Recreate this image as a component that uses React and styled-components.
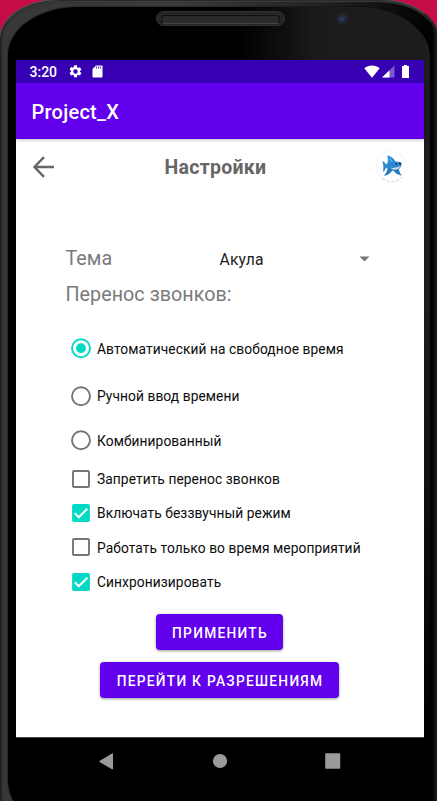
import React from "react";
import styled, { createGlobalStyle } from "styled-components";

const Global = createGlobalStyle`
  * { box-sizing: border-box; }
  html, body { margin: 0; padding: 0; }
  body { background: #c60c46; font-family: Roboto, sans-serif; overflow: hidden; }
`;

const Stage = styled.main`
  width: 437px;
  height: 801px;
  overflow: hidden;
  background: #c60c46;
`;

const Rim = styled.div`
  width: 440px;
  height: 870px;
  margin-left: -1px;
  margin-top: -1px;
  padding: 7px 6px 30px 8px;
  border-radius: 60px 60px 70px 70px / 40px 40px 70px 70px;
  border: 1px solid #555;
  border-right-color: #262626;
  background: linear-gradient(90deg, #383838 0, #3c3c3c 180px, #222 330px, #080808 410px, #000 432px, #222 437px);
  box-shadow: inset 0 0 3px 1px #141414, inset 0 2px 1px #555;
`;

const Bezel = styled.div`
  height: 822px;
  width: 422px;
  padding-left: 8px;
  border-radius: 70px 70px 40px 54px / 48px 50px 40px 50px;
  background:
    linear-gradient(180deg, transparent 0, transparent 300px, #000 730px),
    linear-gradient(90deg, #000 0, #000 230px, #1b1b1b 310px, #1c1c1c 100%);
  box-shadow: 0 0 2px #000;
`;

const Forehead = styled.div`
  position: relative;
  height: 53px;
  margin-left: -8px;
`;

const Speaker = styled.div`
  position: absolute;
  left: 148px;
  top: 4px;
  width: 129px;
  height: 15px;
  padding: 3px 4px;
  border-radius: 8px;
  background: #262626;
  border: 1px solid #303030;
  &::after {
    content: "";
    display: block;
    height: 7px;
    border-radius: 4px;
    border: 1px solid #111;
    border-bottom-color: #444;
    background: #2b2b2b;
  }
`;

const Camera = styled.div`
  position: absolute;
  left: 328px;
  top: 6px;
  width: 13px;
  height: 13px;
  border-radius: 50%;
  background: radial-gradient(circle at 45% 45%, #34426c 0, #222c4b 25%, #23242d 45%, #1b1b1d 75%);
`;

const Screen = styled.div`
  width: 408px;
  height: 725px;
  display: flex;
  flex-direction: column;
  background: #fff;
`;

const StatusBar = styled.header`
  height: 23px;
  flex: none;
  display: flex;
  align-items: center;
  padding: 0 13px 0 13.5px;
  color: #fff;
  background: #3700b3;
  font-size: 14px;
  font-weight: 500;
  svg { display: block; }
`;

const Clock = styled.span`
  width: 38px;
  line-height: 23px;
  padding-top: 1px;
`;

const StatusIcons = styled.div`
  display: flex;
  align-items: center;
  gap: ${(p) => p.$gap}px;
  margin-left: ${(p) => (p.$end ? "auto" : "0")};
`;

const AppBar = styled.div`
  height: 55.6px;
  flex: none;
  padding: 1.5px 0 0 15.5px;
  line-height: 55px;
  color: #fff;
  background: #6200ee;
  box-shadow: 0 1px 3px rgba(0, 0, 0, 0.25);
  font-size: 20px;
  font-weight: 500;
  letter-spacing: 0.25px;
`;

const Content = styled.section`
  flex: 1;
  display: flex;
  flex-direction: column;
`;

const Heading = styled.div`
  height: 56px;
  display: grid;
  grid-template-columns: 24px 1fr 32px;
  align-items: center;
  padding: 0 16px 0 16px;
  svg { display: block; }
`;

const Title = styled.h1`
  margin: 2px 0 0 -1px;
  text-align: center;
  font-size: 19.5px;
  line-height: 24px;
  font-weight: 700;
  letter-spacing: 0.28px;
  color: #666;
`;

const Avatar = styled.div`
  width: 31px;
  height: 31px;
  margin-top: -1px;
  border-radius: 50%;
  border: 1px solid #f5f5f5;
  border-bottom: 1px dashed #d0d0d0;
  display: flex;
  align-items: center;
  justify-content: center;
`;

const ThemeRow = styled.div`
  height: 30px;
  margin-top: 48px;
  padding: 0 54.5px 0 49.5px;
  display: flex;
  align-items: center;
`;

const Label = styled.div`
  width: 154px;
  padding-top: 2.5px;
  font-size: 19.7px;
  line-height: 30px;
  letter-spacing: 0.05px;
  color: #7a7a7a;
`;

const Select = styled.div`
  flex: 1;
  display: flex;
  align-items: center;
  justify-content: space-between;
  padding-top: 3px;
  font-size: 15.7px;
  line-height: 27px;
  letter-spacing: 0.15px;
  color: #222;
`;

const Caption = styled(Label)`
  width: auto;
  padding-top: 0;
  margin: 7.4px 0 0 49.5px;
`;

const Options = styled.div`
  margin-top: 14px;
  padding-left: 54px;
`;

const Option = styled.label`
  height: ${(p) => p.$h}px;
  display: flex;
  align-items: center;
  gap: 5px;
  font-size: 13.75px;
  line-height: 20px;
  color: #0c0c0c;
  svg { flex: none; display: block; }
`;

const OptionText = styled.span`
  padding-top: 1px;
  letter-spacing: 0.085px;
`;

const Actions = styled.div`
  display: flex;
  flex-direction: column;
  align-items: center;
  gap: 12.2px;
  margin-top: 15px;
  padding-right: 1px;
`;

const Button = styled.button`
  width: ${(p) => p.$w}px;
  height: 35.6px;
  padding: 1.2px 0 0 1px;
  border: 0;
  border-radius: 4px;
  background: #6200ee;
  color: #fff;
  font: 500 13.75px Roboto, sans-serif;
  letter-spacing: 1.27px;
  white-space: nowrap;
  box-shadow: 0 1px 3px rgba(0, 0, 0, 0.4);
`;

const NavBar = styled.nav`
  height: 48px;
  flex: none;
  display: flex;
  justify-content: space-between;
  padding: 15px 83px 0 82px;
  border-top: 1px solid #444;
  background: #000;
  svg { display: block; }
`;

const Radio = ({ on }) => (
  <svg width="22" height="22" viewBox="0 0 22 22">
    <circle cx="11" cy="11.2" r="9" fill="none" stroke={on ? "#03dac5" : "#757575"} strokeWidth="1.9" />
    {on && <circle cx="11" cy="11.2" r="4.9" fill="#03dac5" />}
  </svg>
);

const Check = ({ on }) => (
  <svg width="22" height="22" viewBox="0 0 22 22">
    {on ? (
      <>
        <rect x="2.1" y="2" width="17.8" height="18" rx="1.8" fill="#03dac5" />
        <path d="M4.8 11.3l4 4 8.5-8.5" fill="none" stroke="#fff" strokeWidth="2" />
      </>
    ) : (
      <rect x="3" y="3" width="16" height="16" rx="1" fill="none" stroke="#757575" strokeWidth="1.9" />
    )}
  </svg>
);

const Shark = () => (
  <svg width="20" height="22" viewBox="0 0 20 22">
    <path d="M5 9.500C6.600 5.500 6 3 5 .6c4.800.7 8 3.600 9 7.900z" fill="#2f8fd8" />
    <path d="M.3 6C2.500 7 3.600 8.200 4 9.500c3.500-3 10.500-3.800 15.600-1.700l-.6 3.900c-2.300 3.900-6.900 5.200-12 3.300L4 12.500c-.4 2-1.200 3.300-3 4.300.6-3.700.6-7-.7-10.800z" fill="#2c87d2" />
    <path d="M6 12C5.500 16 4 18.500 1.800 20.900c3.700-.6 7-2.500 9.200-6.500zM11 14c1 2.300 2.400 4.300 4 5l4.700 1.700c-1.500-2.300-2.500-5-3.700-8.200z" fill="#257abd" />
    <path d="M8.500 12.800c3.500.4 7-.4 10.300-1.700-2 3.800-6.800 5.300-10.300 1.700z" fill="#cbd6dd" />
    <path d="M7.500 3.500l2.500 3" stroke="#55aee8" strokeWidth="1.2" />
    <circle cx="14.300" cy="8.900" r=".9" fill="#10283d" />
    <path d="M17 7.500l2.200.4v1.700L17.200 9.200z" fill="#18232d" />
  </svg>
);

const GEAR =
  "M19.14 12.94c.04-.3.06-.61.06-.94 0-.32-.02-.64-.07-.94l2.03-1.58a.49.49 0 0 0 .12-.61l-1.92-3.32a.49.49 0 0 0-.59-.22l-2.39.96a7 7 0 0 0-1.62-.94l-.36-2.54A.48.48 0 0 0 13.92 2h-3.84a.48.48 0 0 0-.48.41l-.36 2.54c-.59.24-1.13.57-1.62.94l-2.39-.96a.49.49 0 0 0-.59.22L2.72 8.47a.49.49 0 0 0 .12.61l2.03 1.58a6 6 0 0 0 0 1.88l-2.03 1.58a.49.49 0 0 0-.12.61l1.92 3.32c.12.22.37.29.59.22l2.39-.96c.5.38 1.03.7 1.62.94l.36 2.54c.05.24.24.41.48.41h3.84c.24 0 .44-.17.48-.41l.36-2.54c.59-.24 1.13-.56 1.62-.94l2.39.96c.22.08.47 0 .59-.22l1.92-3.32a.49.49 0 0 0-.12-.61zM12 15.6A3.6 3.6 0 1 1 12 8.4a3.6 3.6 0 0 1 0 7.2z";

const OPTIONS = [
  { kind: "radio", text: "Автоматический на свободное время", on: true, h: 49 },
  { kind: "radio", text: "Ручной ввод времени", h: 45.5 },
  { kind: "radio", text: "Комбинированный", h: 44 },
  { kind: "check", text: "Запретить перенос звонков", h: 33 },
  { kind: "check", text: "Включать беззвучный режим", on: true, h: 35 },
  { kind: "check", text: "Работать только во время мероприятий", h: 34 },
  { kind: "check", text: "Синхронизировать", on: true, h: 35 },
];

export default function App() {
  return (
    <Stage>
      <Global />
      <Rim>
        <Bezel>
          <Forehead>
            <Speaker />
            <Camera />
          </Forehead>
          <Screen>
            <StatusBar>
              <Clock>3:20</Clock>
              <StatusIcons $gap={9}>
                <svg width="15" height="15" viewBox="0 0 24 24">
                  <path d={GEAR} fill="#fff" />
                </svg>
                <svg width="11" height="13" viewBox="0 0 11 13">
                  <path d="M4 .5h5.7c.5 0 .8.4.8.8v10.4c0 .5-.3.8-.8.8H1.3c-.5 0-.8-.3-.8-.8V4z" fill="#fff" />
                  <path d="M4.5 1.500v2M6.500 1.500v2M8.500 1.500v2" stroke="#3700b3" strokeWidth=".8" />
                </svg>
              </StatusIcons>
              <StatusIcons $end $gap={2}>
                <svg width="16" height="13" viewBox="0 0 16 13">
                  <path d="M.3 3.3C4.8-.4 11.2-.4 15.7 3.3L8 12.7z" fill="#fff" />
                </svg>
                <svg width="13" height="13" viewBox="0 0 13 13">
                  <path d="M12.5.5v12H0z" fill="#fff" opacity=".35" />
                  <path d="M7.5 5.3v7.2H0z" fill="#fff" />
                </svg>
                <svg width="14" height="13" viewBox="0 0 14 13">
                  <path d="M7 0h3v1h2v12H5V1h2z" fill="#fff" />
                </svg>
              </StatusIcons>
            </StatusBar>
            <AppBar>Project_X</AppBar>
            <Content>
              <Heading>
                <svg width="24" height="24" viewBox="0 0 24 24" fill="none" stroke="#666" strokeWidth="2.4">
                  <path d="M22 12H2.5M12 2.2L2.500 12l9.500 9.8" />
                </svg>
                <Title>Настройки</Title>
                <Avatar>
                  <Shark />
                </Avatar>
              </Heading>
              <ThemeRow>
                <Label>Тема</Label>
                <Select>
                  Акула
                  <svg width="11" height="6" viewBox="0 0 11 6">
                    <path d="M.5.5h10l-5 5z" fill="#757575" />
                  </svg>
                </Select>
              </ThemeRow>
              <Caption>Перенос звонков:</Caption>
              <Options>
                {OPTIONS.map((o) => (
                  <Option key={o.text} $h={o.h}>
                    {o.kind === "radio" ? <Radio on={o.on} /> : <Check on={o.on} />}
                    <OptionText>{o.text}</OptionText>
                  </Option>
                ))}
              </Options>
              <Actions>
                <Button $w={127.5}>ПРИМЕНИТЬ</Button>
                <Button $w={238.5}>ПЕРЕЙТИ К РАЗРЕШЕНИЯМ</Button>
              </Actions>
            </Content>
            <NavBar>
              <svg width="16" height="17" viewBox="0 0 16 17">
                <path d="M15 1v14.6a.7.7 0 0 1-1 .6L1.5 9a.7.7 0 0 1 0-1L14 .5a.7.7 0 0 1 1 .5z" fill="#9a9a9a" />
              </svg>
              <svg width="16" height="17" viewBox="0 0 16 17">
                <circle cx="8" cy="8" r="7.1" fill="#9a9a9a" />
              </svg>
              <svg width="16" height="17" viewBox="0 0 16 17">
                <rect x=".2" y=".2" width="15" height="15.6" rx="1" fill="#9a9a9a" />
              </svg>
            </NavBar>
          </Screen>
        </Bezel>
      </Rim>
    </Stage>
  );
}
